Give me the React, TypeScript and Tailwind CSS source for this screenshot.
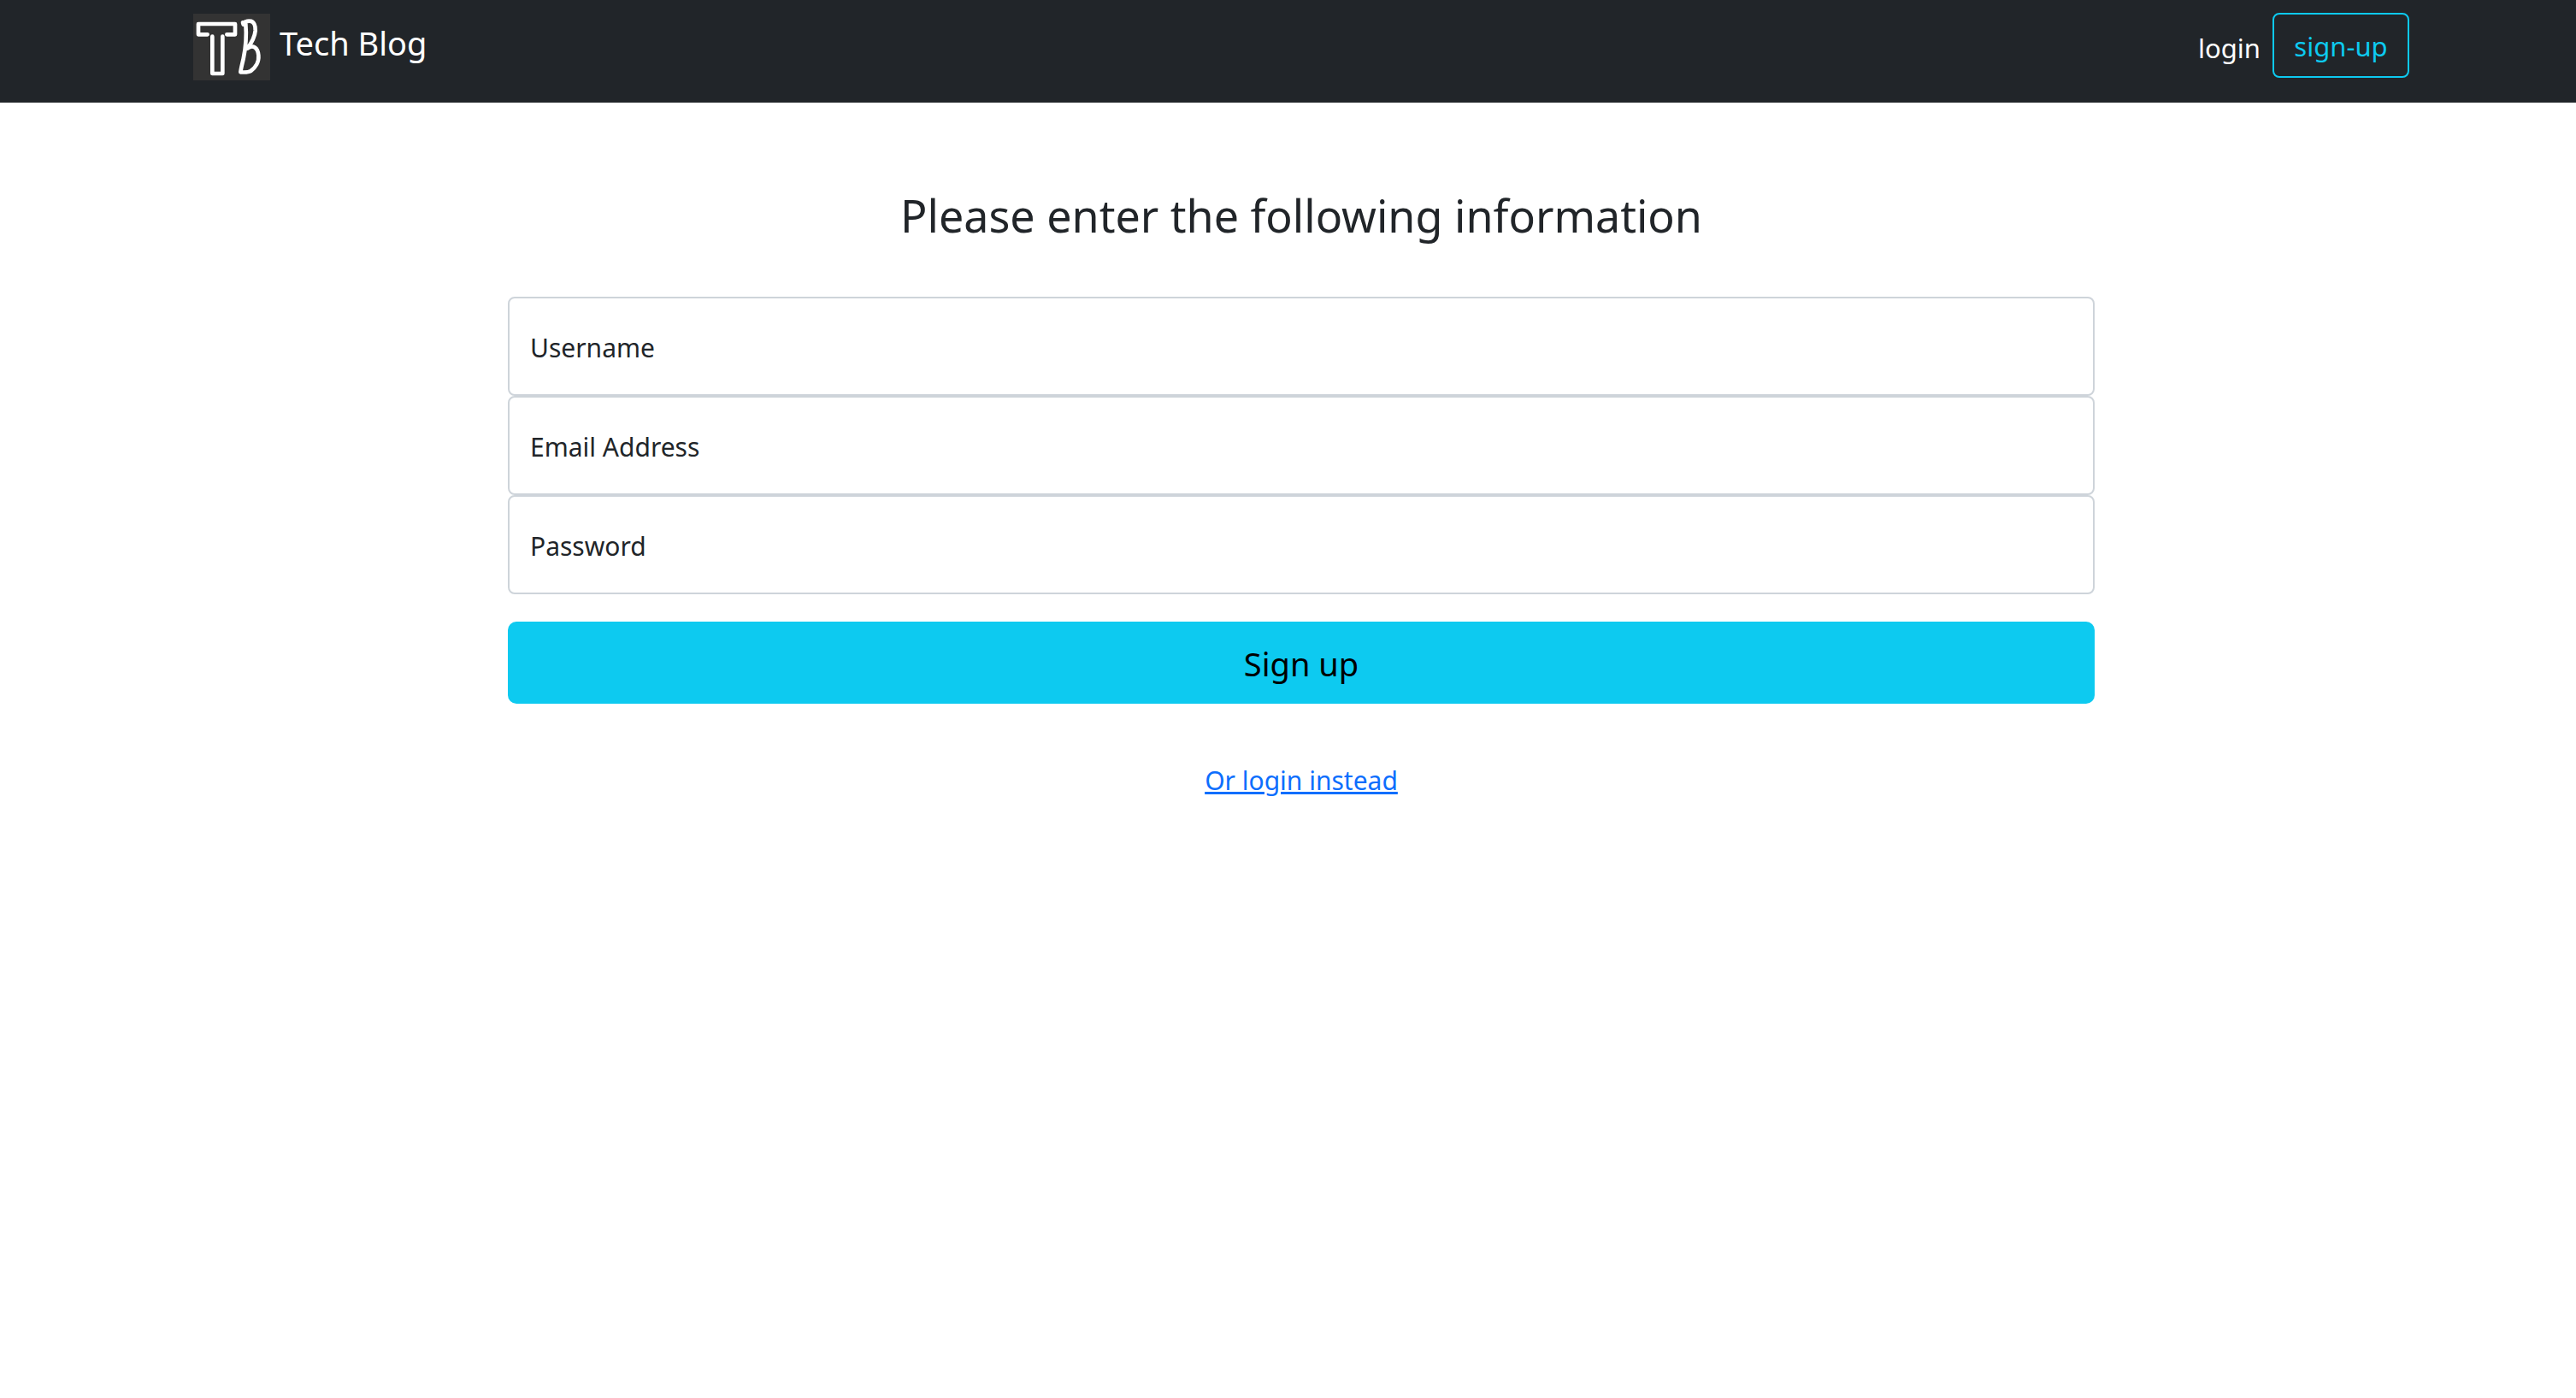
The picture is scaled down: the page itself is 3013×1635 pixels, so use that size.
import { useState } from "react";

type FieldProps = {
  id: string;
  label: string;
  type: string;
  autoComplete: string;
};

function Logo() {
  return (
    <svg viewBox="0 0 270 234" className="h-[78px] w-[90px] shrink-0 bg-[#333333]" aria-hidden="true">
      <g fill="none" stroke="#ffffff" strokeLinecap="round" strokeLinejoin="round">
        <path strokeWidth="14" d="M50 73H18V36H147V73H118" />
        <path strokeWidth="14" d="M67 80V210H103V80" />
        <path
          strokeWidth="14"
          d="M174 31L176 38M176 32C186 28 190 24 200 26C213 28 219 42 218 60C216 82 205 102 190 122C212 106 227 122 229 146C231 170 218 190 202 201C192 207 180 206 167 205M184 36C187 70 184 120 176 158C172 176 168 190 166 205"
        />
      </g>
    </svg>
  );
}

function Field({ id, label, type, autoComplete }: FieldProps) {
  const [value, setValue] = useState("");
  return (
    <div className="relative">
      <input
        id={id}
        name={id}
        type={type}
        autoComplete={autoComplete}
        value={value}
        onChange={(e) => setValue(e.target.value)}
        className="block h-[116px] w-full rounded-lg border-2 border-[#ced4da] bg-white px-6 pt-8 text-[30px] text-[#212529] outline-none focus:border-[#86b7fe]"
      />
      <label
        htmlFor={id}
        className={
          value
            ? "pointer-events-none absolute top-2 left-[26px] text-2xl text-[#212529]"
            : "pointer-events-none absolute inset-0 flex items-center pt-0.5 pl-[26px] text-[30px] text-[#212529]"
        }
      >
        {label}
      </label>
    </div>
  );
}

export default function App() {
  return (
    <div className="min-h-screen bg-white font-['Noto_Sans','Open_Sans',sans-serif] text-[#212529]">
      <header className="bg-[#212529] pt-[15px] pr-6 pb-[26px] pl-[55px]">
        <nav className="mx-auto flex max-w-[2592px] items-start justify-between">
          <a href="#" className="flex items-start gap-[11px] pt-px text-[38px] leading-[68px] text-white">
            <Logo />
            Tech Blog
          </a>
          <div className="flex items-center gap-[14px] text-[31px]">
            <a href="#login" className="pt-1.5 leading-12 text-white">
              login
            </a>
            <button
              type="button"
              className="h-[76px] w-40 rounded-lg border-2 border-[#0dcaf0] pt-0.5 leading-12 text-[#0dcaf0] hover:bg-[#0dcaf0] hover:text-black"
            >
              sign-up
            </button>
          </div>
        </nav>
      </header>

      <main className="pt-[100px] pr-6 pl-[55px]">
        <div className="mx-auto flex max-w-[1856px] flex-col">
          <h1 className="text-center text-[52px] leading-16">Please enter the following information</h1>
          <form className="mt-[63px]" onSubmit={(e) => e.preventDefault()}>
            <Field id="username" label="Username" type="text" autoComplete="username" />
            <Field id="email" label="Email Address" type="email" autoComplete="email" />
            <Field id="password" label="Password" type="password" autoComplete="new-password" />
            <button type="submit" className="mt-8 h-24 w-full rounded-[10px] bg-[#0dcaf0] pt-0.5 text-[38px] text-black">
              Sign up
            </button>
          </form>
          <a
            href="#login"
            className="mt-[66px] self-center text-[30px] leading-12 text-[#0d6efd] underline decoration-3 underline-offset-2"
          >
            Or login instead
          </a>
        </div>
      </main>
    </div>
  );
}
